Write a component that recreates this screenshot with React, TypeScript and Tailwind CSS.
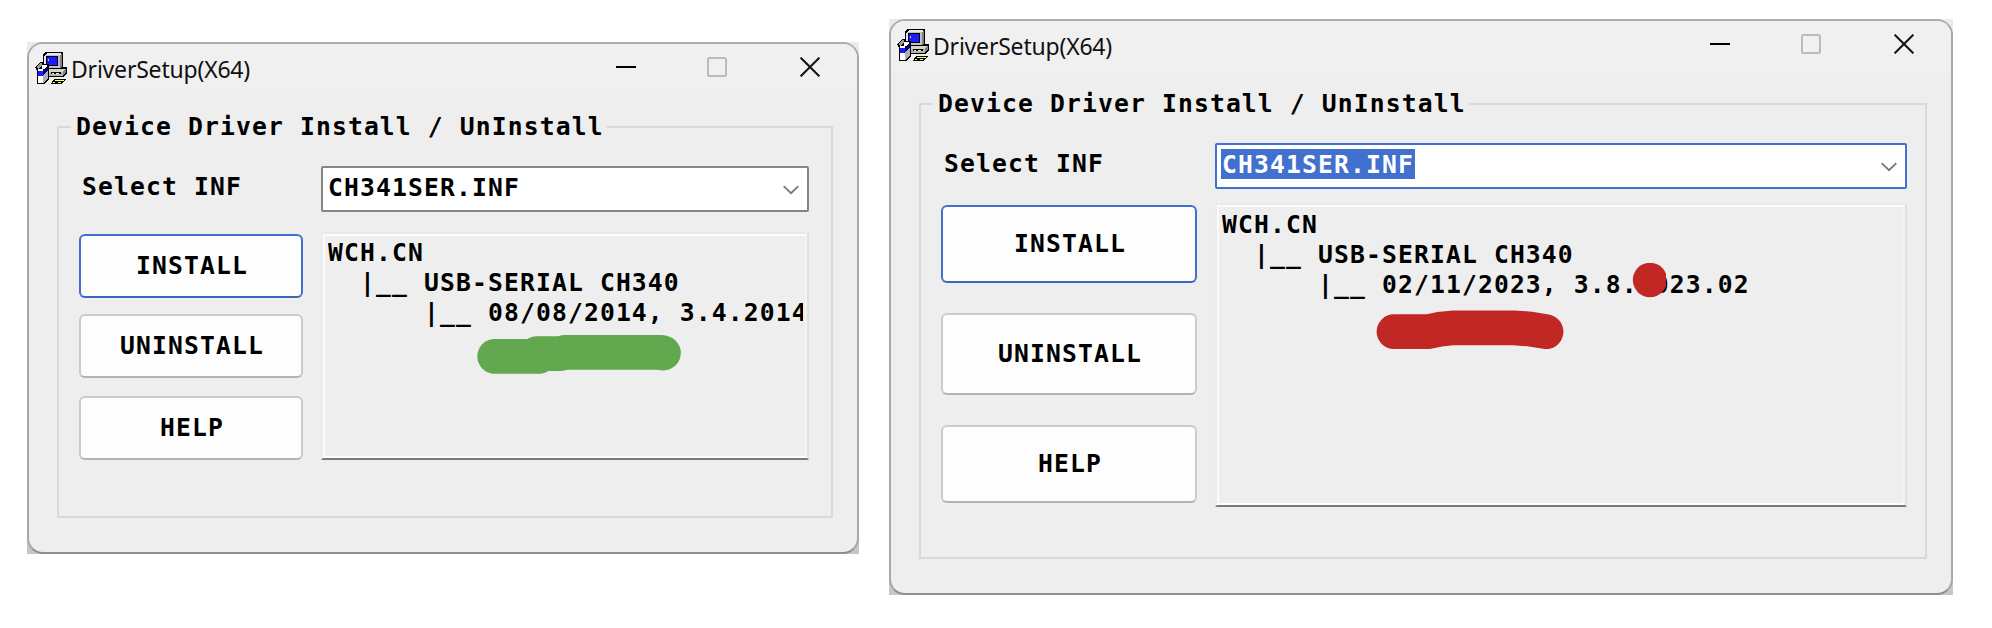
import React from "react";

const MONO = "font-['DejaVu_Sans_Mono','Liberation_Mono',monospace] font-bold text-[24.7px] tracking-[1.13px] leading-[30px] whitespace-pre";

function SetupIcon() {
  return (
    <svg className="block h-8 w-8 shrink-0" viewBox="0 0 32 32" shapeRendering="crispEdges">
      <path d="M10 0H27L28 1V15H31L32 16V21L29 25H14V17H8V3Z" fill="#000" />
      <path d="M9 4L12 1H26V3H11V16H9Z" fill="#e8e8e8" />
      <path d="M11 3H25V16H11Z" fill="#c0c0c0" />
      <path d="M25 3L27 2V14L25 16Z" fill="#808080" />
      <path d="M11 4H23V14H11Z" fill="#000" />
      <path d="M12 5H22V13H12Z" fill="#1c1cff" />
      <path d="M13 7H14V9H13Z" fill="#5ff" />
      <path d="M14 17H30L28 20H14Z" fill="#d4d4d4" />
      <path d="M28 19L31 16V20L28 24Z" fill="#808080" />
      <path d="M14 20H28V24H14Z" fill="#b4b4b4" />
      <path d="M16 20H26V22H16Z" fill="#000" />
      <path d="M17 21H19V22H17ZM21 21H24V22H21Z" fill="#ff6" />
      <path d="M0 15L5 10H8V12H14V27L9 32H2V19Z" fill="#000" />
      <path d="M1 15L5 11H7V14L3 17Z" fill="#9a9a9a" />
      <path d="M7 13H12V15L9 17H7ZM3 17H8V19H3Z" fill="#fff" />
      <path d="M3 19H8V24H3Z" fill="#1c1cff" />
      <path d="M3 24H8V31H3Z" fill="#fff" />
      <path d="M8 19L13 14V26L8 31Z" fill="#b0b0b0" />
      <path d="M8 19L13 14V18L8 23Z" fill="#000080" />
      <path d="M19 27H31L26 32H16Z" fill="#000" />
      <path d="M20 28H29L28 29H19ZM18 30H20V31H18ZM23 30H26V31H23Z" fill="#ff6" />
    </svg>
  );
}

function TitleBar() {
  return (
    <div className="flex h-[50px] shrink-0 bg-[#f0f0f0] pl-[6px] pr-[37px]">
      <div className="pt-2"><SetupIcon /></div>
      <span className="ml-[4px] pt-[8px] font-['Noto_Sans','Open_Sans',sans-serif] text-[23px] leading-[34px] tracking-[-0.2px] text-[#111]">
        DriverSetup(X64)
      </span>
      <div className="ml-auto flex gap-[71px] pt-[13px]">
        <svg className="h-5 w-5" viewBox="0 0 20 20"><path d="M0 9H20V11H0Z" fill="#000" /></svg>
        <svg className="h-5 w-5" viewBox="0 0 20 20"><rect x="1" y="1" width="18" height="18" rx="1.5" fill="none" stroke="#bbb" strokeWidth="2" /></svg>
        <svg className="ml-[2px] h-5 w-5" viewBox="0 0 20 20"><path d="M.6 .6L19.4 19.4M19.4 .6L.6 19.4" stroke="#111" strokeWidth="2" /></svg>
      </div>
    </div>
  );
}

function Button({ label, height, primary, className }: { label: string; height: string; primary?: boolean; className?: string }) {
  return (
    <button
      className={`${MONO} ${height} ${className ?? ""} flex w-full shrink-0 items-center justify-center rounded-[6px] border-2 bg-[#fdfdfd] pl-[2px] text-black ${
        primary ? "border-[#4270cf] border-b-[#3a68bd]" : "border-[#cbcbcb] border-b-[#b3b3b3]"
      }`}
    >
      {label}
    </button>
  );
}

type WindowProps = {
  frame: string;
  groupPad: string;
  leftCol: string;
  heights: string[];
  gaps: string[];
  listHeight: string;
  version: string;
  active?: boolean;
  children: React.ReactNode;
};

function DriverWindow({ frame, groupPad, leftCol, heights, gaps, listHeight, version, active, children }: WindowProps) {
  return (
    <div className={`${frame} shrink-0 bg-gradient-to-b from-[#ebebeb] to-[#c6c6c6] text-black`}>
      <div className="flex h-full w-full flex-col overflow-hidden rounded-[16px] border-2 border-x-[#a8a8a8] border-t-[#adadad] border-b-[#8e8e8e] bg-[#eee]">
        <TitleBar />
        <div className="flex grow flex-col pt-[32px] pr-[24px] pb-[34px] pl-[28px]">
          <div className={`${groupPad} flex grow flex-col border-2 border-[#d9d9d9] pl-[20px]`}>
            <div className={`${MONO} -mt-[16px] -ml-[8px] w-[536px] bg-[#eee] pl-[5px]`}>Device Driver Install / UnInstall</div>
            <div className="mt-[24px] flex h-[46px]">
              <div className={`${MONO} ${leftCol} shrink-0 pt-[6px] pl-[3px]`}>Select INF</div>
              <div className={`flex grow items-start justify-between rounded-[2px] border-2 bg-white pt-[4px] pr-[8px] pl-[4px] ${active ? "border-[#4270cf]" : "border-[#858585]"}`}>
                <span className={`${MONO} h-[30px] pt-px pr-px pl-px ${active ? "bg-[#4270cf] text-white" : ""}`}>CH341SER.INF</span>
                <svg className="mt-[13px] h-[10px] w-4" viewBox="0 0 16 10"><path d="M.7 1.2L8 8.2L15.3 1.2" fill="none" stroke="#777" strokeWidth="1.8" /></svg>
              </div>
            </div>
            <div className="flex">
              <div className={`${leftCol} shrink-0 pr-[18px]`}>
                <Button label="INSTALL" height={heights[0]} className={gaps[0]} primary />
                <Button label="UNINSTALL" height={heights[1]} className={gaps[1]} />
                <Button label="HELP" height={heights[2]} className={gaps[2]} />
              </div>
              <div className={`${listHeight} ${active ? "mt-[14px]" : "mt-[20px]"} relative min-w-0 grow border-2 border-t-[#e9e9e9] border-r-[#e2e2e2] border-b-[#7a7a7a] border-l-[#ebebeb]`}>
                <div className="h-full border-2 border-t-[#fbfbfb] border-r-[#f4f4f4] border-b-[#fdfdfd] border-l-[#fbfbfb] pr-[2px] pl-[3px]">
                  <div className={`${MONO} h-full overflow-hidden`}>
                    <div className={active ? "pt-[3px]" : "pt-[2px]"}>WCH.CN</div>
                    <div>{"  |__ USB-SERIAL CH340"}</div>
                    <div>{"      |__ " + version}</div>
                  </div>
                </div>
                {children}
              </div>
            </div>
          </div>
        </div>
      </div>
    </div>
  );
}

export default function App() {
  return (
    <div className="flex h-[628px] w-[1992px] items-start gap-[30px] overflow-hidden bg-white pl-[27px]">
      <DriverWindow
        frame="mt-[42px] h-[512px] w-[832px]"
        groupPad="pr-[22px]"
        leftCol="w-[242px]"
        heights={["h-[64px]", "h-[64px]", "h-[64px]"]}
        gaps={["mt-[22px]", "mt-[16px]", "mt-[18px]"]}
        listHeight="h-[228px]"
        version="08/08/2014, 3.4.2014"
      >
        <svg className="absolute top-[101px] left-[154px] h-[40px] w-[206px]" viewBox="477 335 206 40">
          <g stroke="#62a84e" strokeWidth="34.8" strokeLinecap="round" fill="none">
            <path d="M494.7 356.4H539" />
            <path d="M537 353.6H560" />
            <path d="M565 352.4H660" />
            <path d="M663 353H663.4" />
          </g>
        </svg>
      </DriverWindow>
      <DriverWindow
        frame="mt-[19px] h-[576px] w-[1064px]"
        groupPad="pr-[18px]"
        leftCol="w-[274px]"
        heights={["h-[78px]", "h-[82px]", "h-[78px]"]}
        gaps={["mt-[16px]", "mt-[30px]", "mt-[30px]"]}
        listHeight="h-[304px]"
        version="02/11/2023, 3.8.2023.02"
        active
      >
        <svg className="absolute top-[58px] left-[159px] h-[88px] w-[290px]" viewBox="1376 263 290 88">
          <circle cx="1650" cy="280" r="17.2" fill="#c12824" />
          <g stroke="#c12824" strokeWidth="34.8" strokeLinecap="round" fill="none">
            <path d="M1394 331.7H1428L1440 329.2L1454 327.8H1514L1530 329L1546 331.7" />
          </g>
        </svg>
      </DriverWindow>
    </div>
  );
}
